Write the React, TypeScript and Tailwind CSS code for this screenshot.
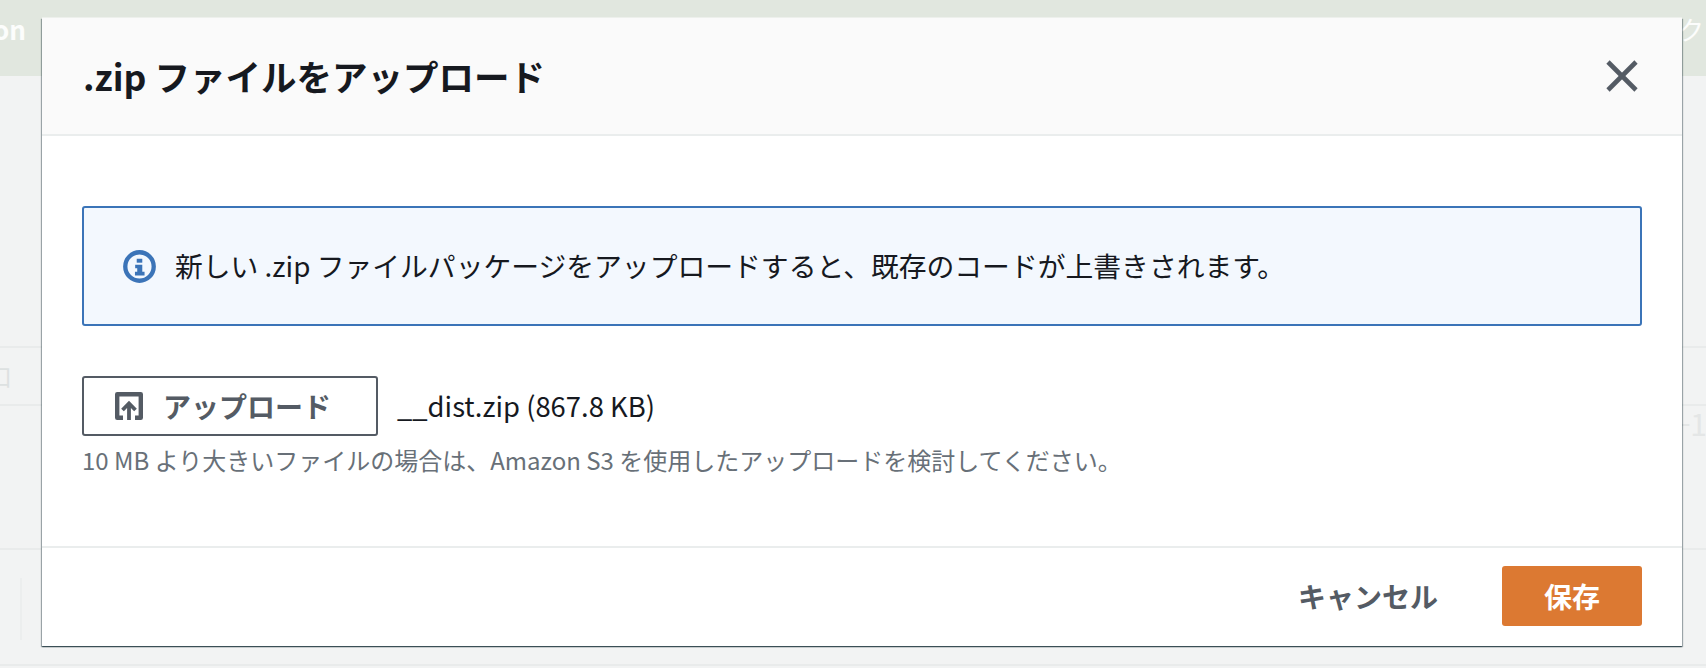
import React from "react";
import { X } from "lucide-react";

const font = { fontFamily: '"Noto Sans CJK JP", "Noto Sans", sans-serif' };

function InfoIcon() {
  return (
    <svg width="33" height="33" viewBox="0 0 32 32" fill="none" className="shrink-0">
      <circle cx="16" cy="16" r="13.8" stroke="#3b74b8" strokeWidth="4.2" />
      <rect x="13.300" y="8.500" width="5.400" height="3.800" fill="#3b74b8" />
      <path d="M11.800 14.200h6.900v7h2.200v3.500h-9.300v-3.500h2.200v-3.500h-2z" fill="#3b74b8" />
    </svg>
  );
}

function UploadIcon() {
  return (
    <svg width="28" height="28" viewBox="0 0 28 28" fill="none" className="shrink-0">
      <path d="M8 25.800H2.200V2.200h23.600v23.600H20" stroke="#545b64" strokeWidth="4.400" strokeLinejoin="round" />
      <path d="M14 28V11.500M7.500 18 14 11.500l6.500 6.500" stroke="#545b64" strokeWidth="3.800" />
    </svg>
  );
}

export default function App() {
  return (
    <div className="relative h-[668px] w-[1706px] overflow-hidden bg-[#f2f3f3]" style={font}>
      {/* page behind the dialog */}
      <div className="flex h-[76px] items-start justify-between bg-[#e1e7df] pt-[10px] text-[26px] leading-[38px] text-white/90">
        <span className="-ml-[7px] font-bold">on</span>
        <span className="mr-[2px]">ク</span>
      </div>
      <div className="mt-[270px] flex h-[60px] items-center border-y-2 border-[#e9ebeb] text-[24px] text-[#dde1e1]">
        <span className="-ml-[12px]">口</span>
      </div>
      <div className="flex h-[142px] justify-end text-[30px] leading-[30px] text-[#e4e6e6]">
        <span className="-mr-px mt-[2px]">−1</span>
      </div>
      <div className="h-[118px] border-y-2 border-[#e9ebeb] pl-[20px] pt-[28px]">
        <div className="h-[62px] w-[2px] bg-[#eceeee]" />
      </div>

      <div className="absolute left-[42px] top-[18px] flex h-[628px] w-[1640px] flex-col bg-white shadow-[0_-1px_0_0_rgba(255,255,255,0.4),0_1px_1px_0_rgba(0,28,36,0.5),1px_1px_1px_0_rgba(0,28,36,0.3),-1px_1px_1px_0_rgba(0,28,36,0.3)]">
        <div className="flex h-[118px] shrink-0 items-center justify-between border-b-2 border-[#eaeded] bg-[#fafafa] pl-[41px] pr-[32px]">
          <h2 className="text-[35.500px] font-bold text-[#16191f]">.zip ファイルをアップロード</h2>
          <X size={56} strokeWidth={2} strokeLinecap="butt" color="#545b64" />
        </div>

        <div className="flex-1 px-[40px] pt-[70px]">
          <div className="flex h-[120px] items-center gap-[19px] rounded-[3px] border-2 border-[#3b74b8] bg-[#f3f8fe] pl-[39px] text-[27.800px] text-[#16191f]">
            <InfoIcon />
            <span>新しい .zip ファイルパッケージをアップロードすると、既存のコードが上書きされます。</span>
          </div>

          <div className="mt-[50px] flex items-center gap-[19px]">
            <button className="flex h-[60px] w-[296px] items-center gap-[20px] rounded-[3px] border-2 border-[#545b64] pl-[31px] text-[28px] font-bold text-[#545b64]">
              <UploadIcon />
              アップロード
            </button>
            <span className="text-[27.400px] text-[#16191f]">__dist.zip (867.8 KB)</span>
          </div>
          <p className="mt-[6px] text-[24px] text-[#687078]">
            10 MB より大きいファイルの場合は、Amazon S3 を使用したアップロードを検討してください。
          </p>
        </div>

        <div className="flex h-[100px] shrink-0 items-center justify-end gap-[64px] border-t-2 border-[#eaeded] pb-[2px] pr-[40px]">
          <button className="text-[28px] font-bold text-[#545b64]">キャンセル</button>
          <button className="h-[60px] w-[140px] rounded-[3px] bg-[#dc7932] text-[28px] font-bold text-white">保存</button>
        </div>
      </div>
    </div>
  );
}
